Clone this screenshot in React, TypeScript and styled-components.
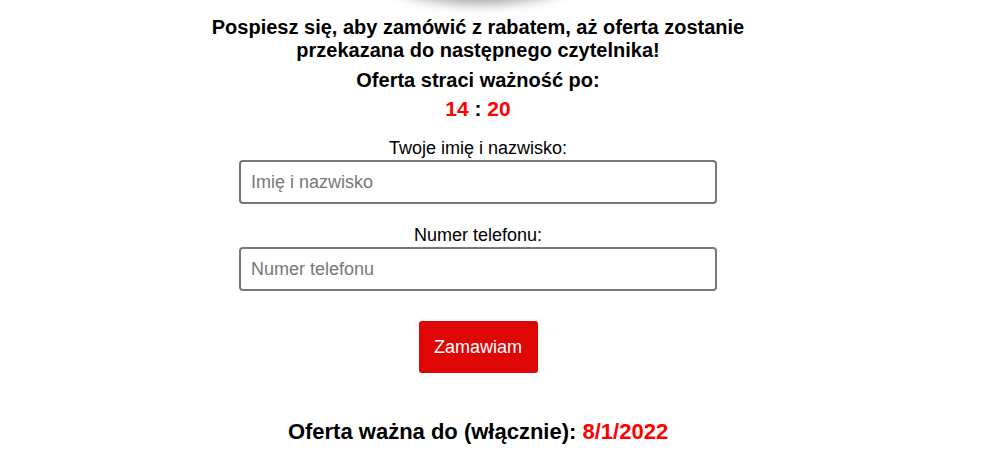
import React from "react";
import styled, { createGlobalStyle } from "styled-components";

const Global = createGlobalStyle`
  html, body { margin: 0; padding: 0; background: #fff; }
  body { font-family: "Liberation Sans", Arial, sans-serif; color: #000; overflow: hidden; }
`;

const Page = styled.div`
  width: 956px;
  display: flex;
  flex-direction: column;
  align-items: center;
`;

const Shadowed = styled.div`
  width: 200px;
  height: 60px;
  margin-top: -60px;
  border-radius: 50%;
  background: #fff;
  box-shadow: -8px 2px 12px 2px rgba(0, 0, 0, 0.35);
  margin-left: 20px;
`;

const Headline = styled.h2`
  margin: 16px 0 0;
  font-size: 20px;
  line-height: 23px;
  font-weight: bold;
  text-align: center;
  width: 600px;
`;

const Expire = styled.div`
  margin-top: 7px;
  font-size: 20px;
  line-height: 23px;
  font-weight: bold;
`;

const Timer = styled.div`
  margin-top: 5px;
  font-size: 21px;
  line-height: 24px;
  font-weight: bold;
  color: #000;
`;

const Red = styled.span`
  color: #ff0000;
`;

const Form = styled.form`
  margin-top: 17px;
  display: flex;
  flex-direction: column;
  align-items: center;
  width: 478px;
`;

const Field = styled.label`
  display: flex;
  flex-direction: column;
  align-items: center;
  width: 100%;
  gap: 1px;
  font-size: 18px;
  line-height: 21px;
  & + & { margin-top: 21px; }
`;

const Input = styled.input`
  box-sizing: border-box;
  width: 100%;
  height: 44px;
  border: 2px solid #777;
  border-radius: 4px;
  padding: 0 10px;
  font-family: "Liberation Sans", Arial, sans-serif;
  font-size: 18px;
  color: #000;
  outline: none;
  &::placeholder { color: #777; }
`;

const Button = styled.button`
  margin-top: 30px;
  width: 119px;
  height: 52px;
  border: none;
  border-radius: 3px;
  background: #df0606;
  color: #fff;
  font-family: "Liberation Sans", Arial, sans-serif;
  font-size: 18px;
  cursor: pointer;
`;

const Valid = styled.div`
  margin-top: 46px;
  font-size: 22px;
  line-height: 26px;
  font-weight: bold;
`;

export default function App() {
  return (
    <>
      <Global />
      <Page>
        <Shadowed />
        <Headline>
          Pospiesz się, aby zamówić z rabatem, aż oferta zostanie przekazana do następnego czytelnika!
        </Headline>
        <Expire>Oferta straci ważność po:</Expire>
        <Timer>
          <Red>14</Red> : <Red>20</Red>
        </Timer>
        <Form onSubmit={(e) => e.preventDefault()}>
          <Field>
            Twoje imię i nazwisko:
            <Input type="text" placeholder="Imię i nazwisko" />
          </Field>
          <Field>
            Numer telefonu:
            <Input type="tel" placeholder="Numer telefonu" />
          </Field>
          <Button type="submit">Zamawiam</Button>
        </Form>
        <Valid>
          Oferta ważna do (włącznie): <Red>8/1/2022</Red>
        </Valid>
      </Page>
    </>
  );
}
